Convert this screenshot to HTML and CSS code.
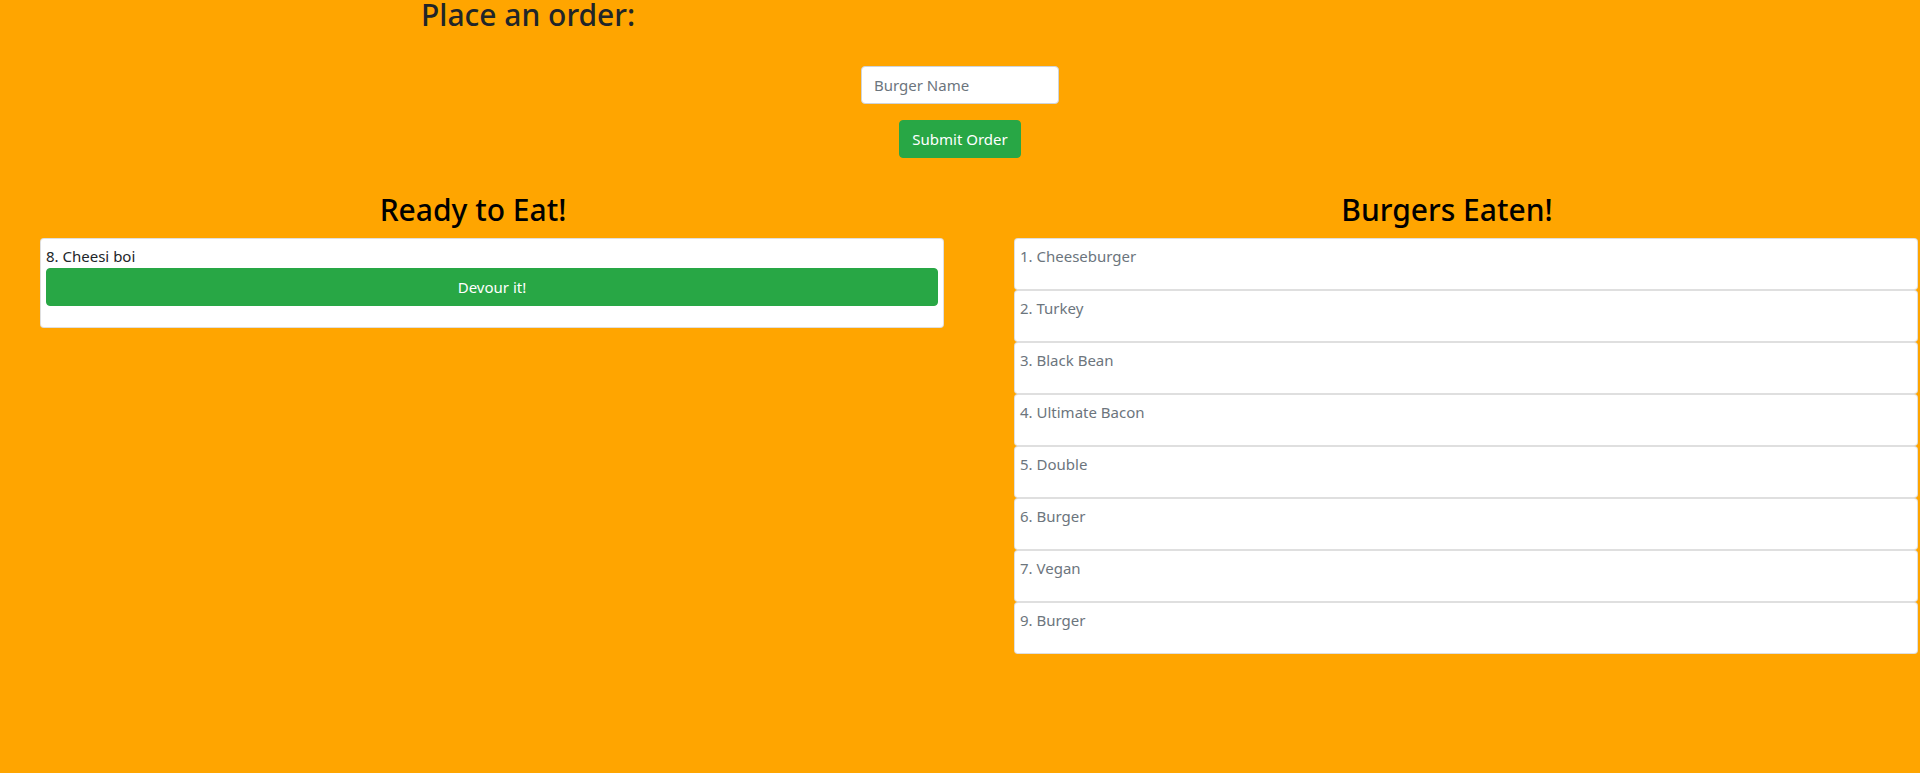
FILE: index.html
```html
<!DOCTYPE html>
<html lang="en">
<head>
<meta charset="utf-8">
<title>Burger Logger</title>
<link rel="stylesheet" href="styles.css">
</head>
<body>
<header class="order">
  <h2 class="order-title">Place an order:</h2>
  <form class="order-form">
    <input class="field" type="text" placeholder="Burger Name">
    <button class="btn btn-green" type="button">Submit Order</button>
  </form>
</header>
<main class="board">
  <section class="column">
    <h2 class="column-title">Ready to Eat!</h2>
    <div class="card">
      <p class="card-text">8. Cheesi boi</p>
      <button class="btn btn-green btn-block" type="button">Devour it!</button>
    </div>
  </section>
  <section class="column">
    <h2 class="column-title">Burgers Eaten!</h2>
    <div class="card eaten"><p class="card-text muted">1. Cheeseburger</p></div>
    <div class="card eaten"><p class="card-text muted">2. Turkey</p></div>
    <div class="card eaten"><p class="card-text muted">3. Black Bean</p></div>
    <div class="card eaten"><p class="card-text muted">4. Ultimate Bacon</p></div>
    <div class="card eaten"><p class="card-text muted">5. Double</p></div>
    <div class="card eaten"><p class="card-text muted">6. Burger</p></div>
    <div class="card eaten"><p class="card-text muted">7. Vegan</p></div>
    <div class="card eaten"><p class="card-text muted">9. Burger</p></div>
  </section>
</main>
</body>
</html>
```
FILE: styles.css
```css
* { box-sizing: border-box; }

html, body {
  margin: 0;
  padding: 0;
}

body {
  background: #ffa500;
  color: #212529;
  font-family: "Noto Sans", "Open Sans", sans-serif;
  font-size: 15px;
  line-height: 24px;
  overflow-x: hidden;
}

h2 {
  margin: 0;
  font-size: 30px;
  font-weight: 500;
}

.order-title {
  line-height: 30px;
  margin-left: 421px;
  color: #212529;
}

.order-form {
  margin-top: 36px;
  display: flex;
  flex-direction: column;
  align-items: center;
  gap: 16px;
}

.field {
  width: 198px;
  height: 38px;
  padding: 6px 12px;
  font-family: inherit;
  font-size: 15px;
  line-height: 24px;
  color: #495057;
  background: #fff;
  border: 1px solid #ced4da;
  border-radius: 4px;
}

.field::placeholder { color: #6c757d; }

.btn {
  height: 38px;
  padding: 6px 12px;
  font-family: inherit;
  font-size: 15px;
  line-height: 24px;
  border: 1px solid transparent;
  border-radius: 4px;
  cursor: pointer;
}

.btn-green {
  background: #28a745;
  border-color: #28a745;
  color: #fff;
}

.btn-block {
  display: block;
  width: 100%;
  margin-bottom: 16px;
}

.board {
  margin-top: 33px;
  display: grid;
  grid-template-columns: 946px 946px;
  column-gap: 28px;
}

.column-title {
  text-align: center;
  line-height: 38px;
  margin-bottom: 9px;
  color: #000;
}

.card {
  width: 904px;
  margin-left: 40px;
  background: #fff;
  border: 1px solid rgba(0, 0, 0, 0.125);
  border-radius: 4px;
  padding: 5px;
}

.card-text {
  margin: 0;
}

.eaten .card-text {
  margin-bottom: 16px;
}

.muted { color: #6c757d; }
```
